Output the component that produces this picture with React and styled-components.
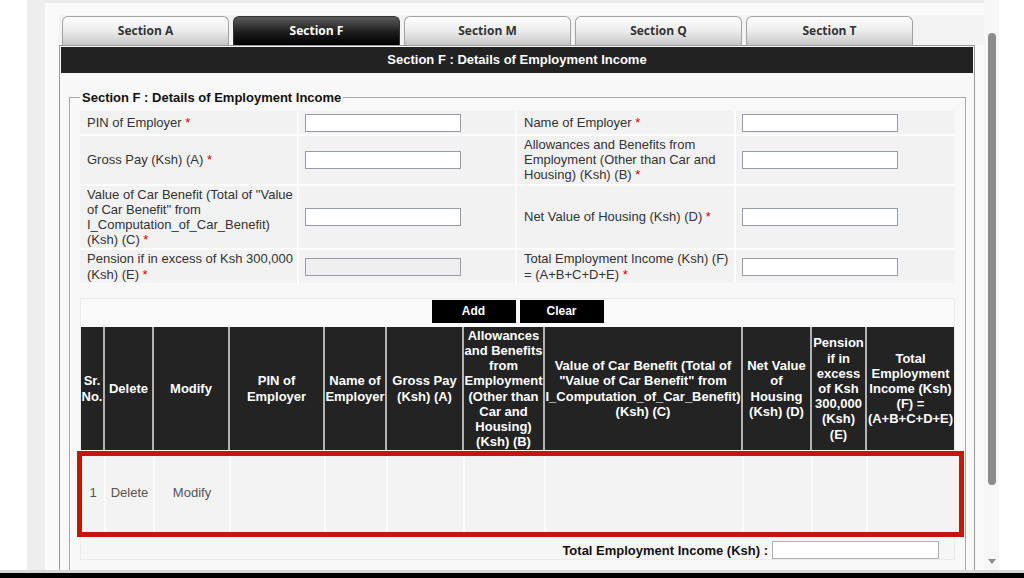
import React from "react";
import styled, { createGlobalStyle } from "styled-components";

const GlobalStyle = createGlobalStyle`
  html, body {
    margin: 0;
    padding: 0;
    background: #fff;
    overflow: hidden;
  }
  body {
    font-family: "Liberation Sans", Arial, sans-serif;
  }
  * {
    box-sizing: border-box;
  }
`;

const tabs = ["Section A", "Section F", "Section M", "Section Q", "Section T"];

const formRows = [
  [
    { lines: ["PIN of Employer"] },
    { lines: ["Name of Employer"] },
  ],
  [
    { lines: ["Gross Pay (Ksh) (A)"] },
    { lines: ["Allowances and Benefits from", "Employment (Other than Car and", "Housing) (Ksh) (B)"] },
  ],
  [
    { lines: ['Value of Car Benefit (Total of "Value', 'of Car Benefit" from', "I_Computation_of_Car_Benefit)", "(Ksh) (C)"] },
    { lines: ["Net Value of Housing (Ksh) (D)"] },
  ],
  [
    { lines: ["Pension if in excess of Ksh 300,000", "(Ksh) (E)"], disabled: true },
    { lines: ["Total Employment Income (Ksh) (F)", "= (A+B+C+D+E)"] },
  ],
];

const columns = [
  { w: 22, lines: ["Sr.", "No."], value: "1" },
  { w: 47, lines: ["Delete"], value: "Delete" },
  { w: 74, lines: ["Modify"], value: "Modify" },
  { w: 93, lines: ["PIN of", "Employer"] },
  { w: 60, lines: ["Name of", "Employer"] },
  { w: 75, lines: ["Gross Pay", "(Ksh) (A)"] },
  { w: 79, lines: ["Allowances", "and Benefits", "from", "Employment", "(Other than", "Car and", "Housing)", "(Ksh) (B)"] },
  { w: 196, lines: ["Value of Car Benefit (Total of", '"Value of Car Benefit" from', "I_Computation_of_Car_Benefit)", "(Ksh) (C)"] },
  { w: 67, lines: ["Net Value", "of", "Housing", "(Ksh) (D)"] },
  { w: 53, lines: ["Pension", "if in", "excess", "of Ksh", "300,000", "(Ksh)", "(E)"] },
  { w: 87, lines: ["Total", "Employment", "Income (Ksh)", "(F) =", "(A+B+C+D+E)"] },
];

const template = columns.map((c) => `${c.w}px`).join(" ");

const Lines = ({ lines, star }) =>
  lines.map((line, i) => (
    <React.Fragment key={i}>
      {i > 0 && <br />}
      {line}
      {star && i === lines.length - 1 && <Star> *</Star>}
    </React.Fragment>
  ));

const App = () => {
  return (
    <Screen>
      <GlobalStyle />
      <Body>
        <Gutter />
        <SideStrip />
        <Main>
          <TopStrip />
          <Content>
            <TabBar>
              {tabs.map((t) => (
                <Tab key={t} $active={t === "Section F"}>
                  {t}
                </Tab>
              ))}
            </TabBar>
            <Panel>
              <PanelHeader>Section F : Details of Employment Income</PanelHeader>
              <PanelBody>
                <Fieldset>
                  <Legend>Section F : Details of Employment Income</Legend>
                  <FormGrid>
                    {formRows.map((row, r) =>
                      row.map((field, f) => (
                        <React.Fragment key={`${r}-${f}`}>
                          <LabelCell>
                            <div>
                              <Lines lines={field.lines} star />
                            </div>
                          </LabelCell>
                          <InputCell>
                            <TextInput type="text" disabled={field.disabled} $disabled={field.disabled} />
                          </InputCell>
                        </React.Fragment>
                      ))
                    )}
                  </FormGrid>

                  <TableArea>
                    <ButtonRow>
                      <ActionButton>Add</ActionButton>
                      <ActionButton>Clear</ActionButton>
                    </ButtonRow>
                    <HeaderGrid>
                      {columns.map((c, i) => (
                        <HeadCell key={i}>
                          <div>
                            <Lines lines={c.lines} />
                          </div>
                        </HeadCell>
                      ))}
                    </HeaderGrid>
                    <Highlight>
                      <DataGrid>
                        {columns.map((c, i) => (
                          <DataCell key={i}>{c.value || ""}</DataCell>
                        ))}
                      </DataGrid>
                    </Highlight>
                    <TotalRow>
                      <TotalLabel>Total Employment Income (Ksh) :</TotalLabel>
                      <TotalInput type="text" />
                    </TotalRow>
                  </TableArea>
                </Fieldset>
              </PanelBody>
            </Panel>
          </Content>
        </Main>
        <ScrollTrack>
          <ScrollThumb />
          <ScrollArrow />
        </ScrollTrack>
        <RightBlank />
      </Body>
      <BottomBar />
    </Screen>
  );
};

// Styled Components
const Screen = styled.div`
  width: 1024px;
  height: 578px;
  display: flex;
  flex-direction: column;
  overflow: hidden;
`;

const Body = styled.div`
  flex: 1;
  min-height: 0;
  display: flex;
`;

const Gutter = styled.div`
  width: 27px;
  background: #fff;
`;

const SideStrip = styled.div`
  width: 18px;
  background: #eeeeee;
`;

const Main = styled.div`
  width: 939px;
  background: #fafafa;
  display: flex;
  flex-direction: column;
  overflow: hidden;
`;

const TopStrip = styled.div`
  flex-shrink: 0;
  height: 3px;
  background: #ebebeb;
`;

const Content = styled.div`
  flex-shrink: 0;
  padding: 12px 9px 0 14px;
`;

const TabBar = styled.div`
  height: 30px;
  margin-right: -9px;
  padding: 1px 0 0 3px;
  display: flex;
  gap: 4px;
  background: #f3f3f3;
`;

const Tab = styled.div`
  width: 167px;
  height: 29px;
  border: 1px solid ${(p) => (p.$active ? "#333" : "#a3a3a3")};
  border-bottom: none;
  border-radius: 6px 6px 0 0;
  background: ${(p) =>
    p.$active
      ? "linear-gradient(#5c5c5c, #1c1c1c 55%, #000)"
      : "linear-gradient(#fefefe, #ececec 50%, #c6c6c6)"};
  color: ${(p) => (p.$active ? "#fff" : "#333")};
  font-family: "Open Sans", "Liberation Sans", sans-serif;
  font-weight: 700;
  font-size: 12px;
  line-height: 27px;
  text-align: center;
`;

const Panel = styled.div`
  border: 1px solid #9a9a9a;
  padding: 1px;
  background: #f8f8f8;
`;

const PanelHeader = styled.div`
  height: 26px;
  background: #222;
  color: #fff;
  font-weight: 700;
  font-size: 13px;
  line-height: 26px;
  text-align: center;
`;

const PanelBody = styled.div`
  padding: 17px 7px 0 8px;
`;

const Fieldset = styled.fieldset`
  margin: 0;
  min-width: 0;
  border: 1px solid #a8a8a8;
  padding: 6px 10px 10px 10px;
`;

const Legend = styled.legend`
  padding: 0 2px;
  font-weight: 700;
  font-size: 13px;
  line-height: 15px;
  color: #111;
`;

const FormGrid = styled.div`
  display: grid;
  grid-template-columns: 217px 216px 217px 1fr;
  gap: 2px;
  background: #fcfcfc;
`;

const LabelCell = styled.div`
  min-height: 23px;
  padding: 1px 3px 1px 7px;
  display: flex;
  align-items: center;
  background: #f2f2f2;
  color: #333;
  font-size: 13px;
  line-height: 15.2px;
  white-space: nowrap;
`;

const Star = styled.span`
  color: #d40000;
`;

const InputCell = styled.div`
  padding: 0 6px;
  display: flex;
  align-items: center;
  background: #f2f2f2;
`;

const TextInput = styled.input`
  width: 156px;
  height: 18px;
  margin: 0;
  padding: 0 3px;
  border: 1px solid #959ca3;
  background: ${(p) => (p.$disabled ? "#efefef" : "#fff")};
  font: 12px "Liberation Sans", Arial, sans-serif;
`;

const TableArea = styled.div`
  margin-top: 15px;
  border: 1px solid #ebebeb;
  background: #f6f6f6;
`;

const ButtonRow = styled.div`
  display: flex;
  justify-content: center;
  gap: 4px;
  padding: 1px 0 4px;
  background: #fafafa;
`;

const ActionButton = styled.button`
  width: 84px;
  height: 23px;
  margin: 0;
  padding: 0;
  border: none;
  background: #000;
  color: #fff;
  font: 700 12px "Liberation Sans", Arial, sans-serif;
`;

const HeaderGrid = styled.div`
  display: grid;
  grid-template-columns: ${template};
  column-gap: 2px;
  background: #b3b3b3;
`;

const HeadCell = styled.div`
  padding: 1px 0;
  display: flex;
  align-items: center;
  justify-content: center;
  background: #232323;
  color: #fff;
  font-weight: 700;
  font-size: 13px;
  line-height: 15.2px;
  text-align: center;
  white-space: nowrap;
`;

const Highlight = styled.div`
  margin: 1px -10px 0 -4px;
  padding: 0 4px 0 0;
  border: 5px solid #c4160e;
  background: #f4f4f4;
`;

const DataGrid = styled.div`
  display: grid;
  grid-template-columns: ${template};
  column-gap: 2px;
  height: 76px;
  background: #fbfbfb;
`;

const DataCell = styled.div`
  padding-bottom: 4px;
  display: flex;
  align-items: center;
  justify-content: center;
  background: #f3f3f3;
  color: #555;
  font-size: 13px;
  white-space: nowrap;
`;

const TotalRow = styled.div`
  margin-top: 4px;
  padding-right: 15px;
  display: flex;
  justify-content: flex-end;
  align-items: center;
  gap: 4px;
`;

const TotalLabel = styled.span`
  font-weight: 700;
  font-size: 13px;
  color: #111;
`;

const TotalInput = styled.input`
  width: 167px;
  height: 18px;
  margin: 0;
  border: 1px solid #a9b0b6;
  background: #fff;
`;

const ScrollTrack = styled.div`
  width: 15px;
  padding-top: 33px;
  display: flex;
  flex-direction: column;
  align-items: center;
  background: #f7f7f7;
`;

const ScrollThumb = styled.div`
  width: 8px;
  height: 452px;
  border-radius: 4px;
  background: #8c8c8c;
`;

const ScrollArrow = styled.div`
  margin-top: auto;
  margin-bottom: 6px;
  width: 0;
  height: 0;
  border-left: 4px solid transparent;
  border-right: 4px solid transparent;
  border-top: 5px solid #8c8c8c;
`;

const RightBlank = styled.div`
  flex: 1;
  background: #fff;
`;

const BottomBar = styled.div`
  height: 8px;
  border-top: 3px solid #d8d8d8;
  background: #000;
`;

export default App;
